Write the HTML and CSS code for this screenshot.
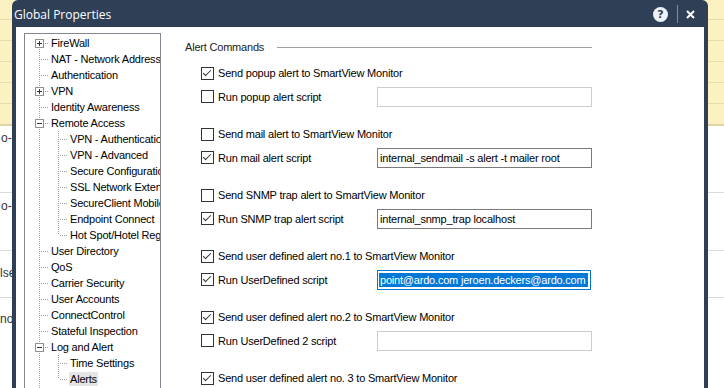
FILE: index.html
```html
<!DOCTYPE html>
<html lang="en">
<head>
    <meta charset="UTF-8">
    <meta name="viewport" content="width=device-width, initial-scale=1.0">
    <title>Global Properties</title>
    <link rel="stylesheet" href="styles.css">
</head>
<body>
    <div class="sheet">
        <div class="sheet-head">
            <div class="hrow first"></div>
            <div class="hrow"></div>
            <div class="hrow"></div>
            <div class="hrow"></div>
            <div class="hrow"></div>
            <div class="hrow last"></div>
        </div>
        <div class="srow r1"><span>o-</span></div>
        <div class="srow r2"><span>o-</span></div>
        <div class="srow r3"><span>lse</span></div>
        <div class="srow r4"><span>nor</span></div>
    </div>

    <div class="dialog">
        <div class="titlebar">
            <span class="title">Global Properties</span>
            <span class="help">?</span>
            <span class="sep"></span>
            <span class="close">
                <svg width="9" height="9" viewBox="0 0 9 9"><path d="M1 1 L8 8 M8 1 L1 8" stroke="#fff" stroke-width="2" fill="none"/></svg>
            </span>
        </div>
        <div class="dlg-body">
            <div class="tree">
                <div class="node"><span class="g start h"><i class="exp plus"></i></span><span class="txt">FireWall</span></div>
                <div class="node"><span class="g v h"></span><span class="txt">NAT - Network Address Translation</span></div>
                <div class="node"><span class="g v h"></span><span class="txt">Authentication</span></div>
                <div class="node"><span class="g v h"><i class="exp plus"></i></span><span class="txt">VPN</span></div>
                <div class="node"><span class="g v h"></span><span class="txt">Identity Awareness</span></div>
                <div class="node"><span class="g v h"><i class="exp"></i></span><span class="txt">Remote Access</span></div>
                <div class="node"><span class="g v"></span><span class="g v h"></span><span class="txt">VPN - Authentication</span></div>
                <div class="node"><span class="g v"></span><span class="g v h"></span><span class="txt">VPN - Advanced</span></div>
                <div class="node"><span class="g v"></span><span class="g v h"></span><span class="txt">Secure Configuration Verification</span></div>
                <div class="node"><span class="g v"></span><span class="g v h"></span><span class="txt">SSL Network Extender</span></div>
                <div class="node"><span class="g v"></span><span class="g v h"></span><span class="txt">SecureClient Mobile</span></div>
                <div class="node"><span class="g v"></span><span class="g v h"></span><span class="txt">Endpoint Connect</span></div>
                <div class="node"><span class="g v"></span><span class="g end h"></span><span class="txt">Hot Spot/Hotel Registration</span></div>
                <div class="node"><span class="g v h"></span><span class="txt">User Directory</span></div>
                <div class="node"><span class="g v h"></span><span class="txt">QoS</span></div>
                <div class="node"><span class="g v h"></span><span class="txt">Carrier Security</span></div>
                <div class="node"><span class="g v h"></span><span class="txt">User Accounts</span></div>
                <div class="node"><span class="g v h"></span><span class="txt">ConnectControl</span></div>
                <div class="node"><span class="g v h"></span><span class="txt">Stateful Inspection</span></div>
                <div class="node"><span class="g v h"><i class="exp"></i></span><span class="txt">Log and Alert</span></div>
                <div class="node"><span class="g v"></span><span class="g v h"></span><span class="txt">Time Settings</span></div>
                <div class="node"><span class="g v"></span><span class="g end h"></span><span class="txt selected">Alerts</span></div>
                <div class="node"><span class="g v h"></span><span class="txt">Reporting Tools</span></div>
            </div>

            <div class="panel">
                <div class="legend">Alert Commands</div>
                <div class="cmds">
                    <div class="group">
                        <div class="row"><span class="cb on"></span><span class="lbl">Send popup alert to SmartView Monitor</span></div>
                        <div class="row run"><span class="chk"><span class="cb"></span><span class="lbl">Run popup alert script</span></span><span class="field off"></span></div>
                    </div>
                    <div class="group">
                        <div class="row"><span class="cb"></span><span class="lbl">Send mail alert to SmartView Monitor</span></div>
                        <div class="row run"><span class="chk"><span class="cb on"></span><span class="lbl">Run mail alert script</span></span><span class="field">internal_sendmail -s alert -t mailer root</span></div>
                    </div>
                    <div class="group">
                        <div class="row"><span class="cb"></span><span class="lbl">Send SNMP trap alert to SmartView Monitor</span></div>
                        <div class="row run"><span class="chk"><span class="cb on"></span><span class="lbl">Run SNMP trap alert script</span></span><span class="field">internal_snmp_trap localhost</span></div>
                    </div>
                    <div class="group">
                        <div class="row"><span class="cb on"></span><span class="lbl">Send user defined alert no.1 to SmartView Monitor</span></div>
                        <div class="row run"><span class="chk"><span class="cb on"></span><span class="lbl">Run UserDefined script</span></span><span class="field focus"><span class="sel">point@ardo.com jeroen.deckers@ardo.com</span><span class="caret"></span></span></div>
                    </div>
                    <div class="group">
                        <div class="row"><span class="cb on"></span><span class="lbl">Send user defined alert no.2 to SmartView Monitor</span></div>
                        <div class="row run"><span class="chk"><span class="cb"></span><span class="lbl">Run UserDefined 2 script</span></span><span class="field off"></span></div>
                    </div>
                    <div class="group">
                        <div class="row"><span class="cb on"></span><span class="lbl">Send user defined alert no. 3 to SmartView Monitor</span></div>
                    </div>
                </div>
            </div>
        </div>
    </div>
</body>
</html>
```

FILE: styles.css
```css
body {
    margin: 0;
    width: 724px;
    height: 388px;
    overflow: hidden;
    position: relative;
    background: #fff;
    font-family: "Liberation Sans", Arial, sans-serif;
    font-size: 11px;
    letter-spacing: -0.2px;
    color: #000;
}

/* spreadsheet behind the dialog */
.sheet-head {
    background: #fcf2c1;
    border-bottom: 2px solid #e0d6a3;
}
.hrow {
    height: 20px;
    border-bottom: 1px solid #e6dcaa;
}
.hrow.first { height: 19px; }
.hrow.last { border-bottom: none; height: 20px; }
.srow {
    box-sizing: border-box;
    border-bottom: 1px solid #dcdcdc;
    font-size: 12px;
    letter-spacing: 0;
    color: #333;
    line-height: 14px;
}
.srow.r1 { height: 67px; padding-top: 5px; padding-left: 1px; }
.srow.r2 { height: 58px; padding-top: 6px; padding-left: 1px; }
.srow.r3 { height: 47px; padding-top: 15px; }
.srow.r4 { border-bottom: none; padding-top: 14px; }

/* dialog */
.dialog {
    position: absolute;
    left: 12px;
    top: 0;
    width: 696px;
    height: 400px;
    background: #2e3f56;
    border-radius: 6px 6px 0 0;
    display: flex;
    flex-direction: column;
}
.titlebar {
    flex: none;
    height: 27px;
    display: flex;
    align-items: center;
    padding: 0 13px 0 2px;
    color: #fff;
}
.title {
    font-family: "Open Sans", "Noto Sans", sans-serif;
    font-size: 12px;
    letter-spacing: 0;
    flex: 1;
    padding-top: 2px;
}
.help {
    width: 15px;
    height: 15px;
    border-radius: 50%;
    background: #eef2f8;
    color: #2e3f56;
    font-family: "DejaVu Sans", sans-serif;
    font-weight: bold;
    font-size: 11px;
    letter-spacing: 0;
    line-height: 15px;
    text-align: center;
    margin-top: 2px;
}
.sep {
    width: 1px;
    height: 18px;
    background: #7d8ca0;
    margin: 0 8px 0 9px;
}
.close {
    display: flex;
    margin-top: 1px;
}

.dlg-body {
    flex: 1;
    min-height: 0;
    margin: 0 4px;
    background: #fff;
    display: flex;
    align-items: flex-start;
    padding: 6px 8px 0;
}

/* tree */
.tree {
    width: 130px;
    height: 360px;
    border: 1px solid #828790;
    padding: 1px 0 0 5px;
    overflow: hidden;
    flex: none;
}
.node {
    display: flex;
    align-items: center;
    height: 16px;
    white-space: nowrap;
}
.g {
    width: 19px;
    height: 16px;
    flex: none;
    position: relative;
}
.g.v::before,
.g.start::before,
.g.end::before {
    content: "";
    position: absolute;
    left: 9px;
    top: 0;
    bottom: 0;
    width: 1px;
    background: repeating-linear-gradient(to bottom, #a0a0a0 0 1px, transparent 1px 2px);
}
.g.start::before { top: 8px; }
.g.end::before { bottom: 8px; }
.g.h::after {
    content: "";
    position: absolute;
    left: 11px;
    right: 0;
    top: 8px;
    height: 1px;
    background: repeating-linear-gradient(to right, #a0a0a0 0 1px, transparent 1px 2px);
}
.exp {
    position: absolute;
    left: 5px;
    top: 4px;
    width: 7px;
    height: 7px;
    border: 1px solid #919191;
    background: #fff;
    z-index: 1;
}
.exp::before {
    content: "";
    position: absolute;
    left: 1px;
    top: 3px;
    width: 5px;
    height: 1px;
    background: #333;
}
.exp.plus::after {
    content: "";
    position: absolute;
    left: 3px;
    top: 1px;
    width: 1px;
    height: 5px;
    background: #333;
}
.txt {
    margin-left: 1px;
    padding: 0 1px;
    line-height: 14px;
}
.txt.selected { background: #e5e5e5; }

/* alert commands */
.panel {
    width: 407px;
    margin-left: 24px;
    padding-top: 7px;
}
.legend {
    display: flex;
    align-items: center;
    height: 14px;
    color: #222;
}
.legend::after {
    content: "";
    flex: 1;
    height: 1px;
    background: #a0a0a0;
    margin-left: 13px;
}
.cmds { padding: 11px 0 0 16px; }
.group { margin-bottom: 19px; }
.row {
    display: flex;
    align-items: center;
    height: 16px;
    white-space: nowrap;
}
.row.run {
    height: 20px;
    margin-top: 6px;
}
.chk {
    width: 176px;
    display: flex;
    align-items: center;
    padding-bottom: 1px;
}
.cb {
    width: 11px;
    height: 11px;
    border: 1px solid #333;
    background: #fff;
    flex: none;
    position: relative;
}
.cb.on::after {
    content: "";
    position: absolute;
    left: 3px;
    top: 0;
    width: 3px;
    height: 7px;
    border: solid #333;
    border-width: 0 1px 1px 0;
    transform: rotate(45deg);
}
.lbl { margin-left: 4px; }
.field {
    width: 211px;
    height: 18px;
    border: 1px solid #7a7a7a;
    display: flex;
    align-items: center;
    padding-left: 2px;
    box-sizing: content-box;
    overflow: hidden;
    white-space: nowrap;
}
.field.off { border-color: #cccccc; }
.field.focus { border-color: #0078d7; padding-left: 1px; }
.sel {
    background: #0078d7;
    color: #fff;
    line-height: 14px;
    padding: 0 1px;
}
.caret {
    width: 1px;
    height: 14px;
    background: #a0522d;
}
```
